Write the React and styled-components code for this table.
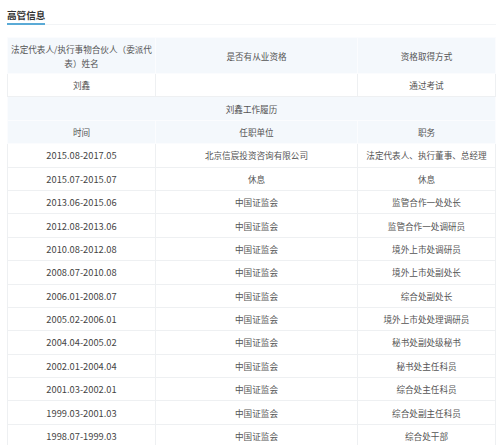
import React from 'react';
import styled, { createGlobalStyle } from 'styled-components';

const GlobalStyle = createGlobalStyle`
  body {
    margin: 0;
    background: #fff;
    font-family: "Noto Sans CJK SC", "Noto Sans", sans-serif;
  }
`;

const history = [
  ['2015.08-2017.05', '北京信宸投资咨询有限公司', '法定代表人、执行董事、总经理'],
  ['2015.07-2015.07', '休息', '休息'],
  ['2013.06-2015.06', '中国证监会', '监管合作一处处长'],
  ['2012.08-2013.06', '中国证监会', '监管合作一处调研员'],
  ['2010.08-2012.08', '中国证监会', '境外上市处调研员'],
  ['2008.07-2010.08', '中国证监会', '境外上市处副处长'],
  ['2006.01-2008.07', '中国证监会', '综合处副处长'],
  ['2005.02-2006.01', '中国证监会', '境外上市处处理调研员'],
  ['2004.04-2005.02', '中国证监会', '秘书处副处级秘书'],
  ['2002.01-2004.04', '中国证监会', '秘书处主任科员'],
  ['2001.03-2002.01', '中国证监会', '综合处主任科员'],
  ['1999.03-2001.03', '中国证监会', '综合处副主任科员'],
  ['1998.07-1999.03', '中国证监会', '综合处干部'],
];

const App = () => {
  return (
    <>
      <GlobalStyle />
      <Page>
        <TitleBar>
          <Title>高管信息</Title>
        </TitleBar>
        <Table>
          <colgroup>
            <col style={{ width: 148 }} />
            <col style={{ width: 202 }} />
            <col />
          </colgroup>
          <tbody>
            <Row $tint $tall>
              <Cell $head>法定代表人/执行事物合伙人（委派代表）姓名</Cell>
              <Cell $head>是否有从业资格</Cell>
              <Cell $head>资格取得方式</Cell>
            </Row>
            <Row>
              <Cell>刘鑫</Cell>
              <Cell></Cell>
              <Cell>通过考试</Cell>
            </Row>
            <Row $tint>
              <Cell $head colSpan={3}>刘鑫工作履历</Cell>
            </Row>
            <Row $tint>
              <Cell $head>时间</Cell>
              <Cell $head>任职单位</Cell>
              <Cell $head>职务</Cell>
            </Row>
            {history.map(([time, org, post]) => (
              <Row key={time}>
                <Cell $date>{time}</Cell>
                <Cell>{org}</Cell>
                <Cell>{post}</Cell>
              </Row>
            ))}
          </tbody>
        </Table>
      </Page>
    </>
  );
};

const Page = styled.div`
  padding: 0 4px 0 7px;
`;

const TitleBar = styled.div`
  height: 24px;
  border-bottom: 1px solid #f2f4f6;
  margin-bottom: 12px;
`;

const Title = styled.div`
  display: inline-block;
  height: 22px;
  padding-top: 5px;
  box-sizing: border-box;
  white-space: nowrap;
  font-size: 9.6px;
  font-weight: bold;
  color: #333;
  line-height: 14px;
  border-bottom: 2px solid #5aaad6;
`;

const Table = styled.table`
  width: 489px;
  border-collapse: collapse;
  table-layout: fixed;
  border: 1px solid #f0f3f6;
`;

const Row = styled.tr`
  height: ${(p) => (p.$tall ? '36px' : '23.4px')};
  background: ${(p) => (p.$tint ? '#f4f8fc' : '#fff')};
`;

const Cell = styled.td`
  padding: 0 3px;
  text-align: center;
  vertical-align: middle;
  font-size: ${(p) => (p.$date ? '9.3px' : '8.6px')};
  line-height: 14px;
  color: ${(p) => (p.$date ? '#444' : '#555')};
  border: 1px solid ${(p) => (p.$head ? '#fbfcfe' : '#eef0f2')};
`;

export default App;
